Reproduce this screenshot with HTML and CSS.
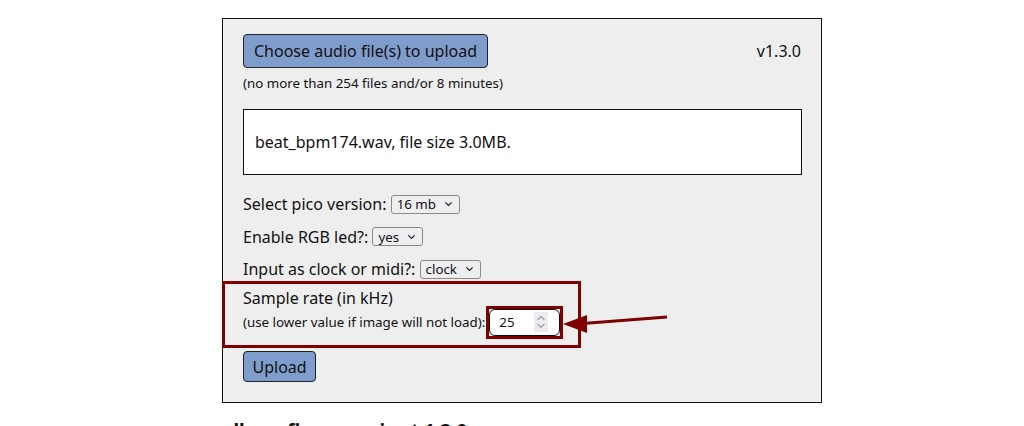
FILE: index.html
```html
<!DOCTYPE html>
<html>
<head>
<meta charset="utf-8">
<link rel="stylesheet" href="styles.css">
</head>
<body>
<div class="page">
  <div class="panel">
    <div class="top">
      <div>
        <button class="btn btn-big">Choose audio file(s) to upload</button>
        <div class="note">(no more than 254 files and/or 8 minutes)</div>
      </div>
      <div class="version">v1.3.0</div>
    </div>
    <div class="filebox">beat_bpm174.wav, file size 3.0MB.</div>
    <div class="rows">
      <div class="row">Select pico version: <span class="sel">16 mb<svg viewBox="0 0 10 6" class="chev"><path d="M1.5 1.2 5 4.6 8.5 1.2" /></svg></span></div>
      <div class="row">Enable RGB led?: <span class="sel">yes<svg viewBox="0 0 10 6" class="chev"><path d="M1.5 1.2 5 4.6 8.5 1.2" /></svg></span></div>
      <div class="row">Input as clock or midi?: <span class="sel">clock<svg viewBox="0 0 10 6" class="chev"><path d="M1.5 1.2 5 4.6 8.5 1.2" /></svg></span></div>
    </div>
    <div class="sample">
      <div class="sample-title">Sample rate (in kHz)</div>
      <div class="sample-row">
        <span class="note">(use lower value if image will not load):</span>
        <span class="numwrap">
          <span class="num">
            <span class="numval">25</span>
            <span class="spin"><svg viewBox="0 0 12 18" width="12" height="18"><path d="M2.5 7 6 3.5 9.5 7M2.5 11 6 14.5 9.5 11" fill="none" stroke="#9a9aa0" stroke-width="1.1"/></svg></span>
          </span>
        </span>
      </div>
    </div>
    <button class="btn btn-up">Upload</button>
    <svg class="arrow" width="106" height="26" viewBox="0 0 106 26">
      <line x1="104" y1="5" x2="20" y2="11.5" stroke="#7f0000" stroke-width="3"/>
      <polygon points="0,12 24,3 24,21" fill="#7f0000"/>
    </svg>
  </div>
  <div class="footer">all our firmware is at 1.3.0</div>
</div>
</body>
</html>
```
FILE: styles.css
```css
html, body {
  margin: 0;
  padding: 0;
  background: #ffffff;
}
body {
  font-family: "Noto Sans", "Open Sans", sans-serif;
  color: #111;
}
.page {
  padding: 18px 0 0 222px;
}
.panel {
  position: relative;
  width: 600px;
  height: 385px;
  box-sizing: border-box;
  border: 1px solid #111;
  background: #eeeeee;
  padding: 15px 20px 0 20px;
}
.top {
  display: flex;
  justify-content: space-between;
  align-items: flex-start;
}
.version {
  font-size: 16px;
  padding-top: 6px;
}
.btn {
  font-family: "Noto Sans", "Open Sans", sans-serif;
  background: #7f9dcc;
  border: 1px solid #222;
  border-radius: 4px;
  color: #111;
  cursor: pointer;
}
.btn-big {
  font-size: 16px;
  height: 34px;
  padding: 0 10px;
  display: block;
}
.note {
  font-size: 13.33px;
  margin-top: 6px;
  line-height: 18px;
}
.filebox {
  margin-top: 17px;
  width: 559px;
  height: 66px;
  box-sizing: border-box;
  background: #fff;
  border: 1px solid #111;
  display: flex;
  align-items: center;
  padding-left: 11px;
  font-size: 16px;
}
.rows {
  display: flex;
  flex-direction: column;
  gap: 4.5px;
  margin-top: 15px;
}
.row {
  font-size: 16px;
  height: 28px;
  display: flex;
  align-items: center;
  white-space: pre;
}
.sel {
  display: inline-flex;
  align-items: center;
  height: 19px;
  box-sizing: border-box;
  border: 1px solid #8a8a8a;
  border-radius: 3px;
  background: #efeff2;
  font-size: 13.33px;
  padding: 0 6px 0 5px;
  gap: 8px;
}
.chev {
  width: 9px;
  height: 6px;
  fill: none;
  stroke: #222;
  stroke-width: 1.4;
}
.sample {
  margin: -2px 0 0 -21px;
  width: 359px;
  height: 67px;
  box-sizing: border-box;
  border: 3px solid #7f0000;
  padding: 3px 0 0 18px;
}
.sample-title {
  font-size: 16px;
  line-height: 22px;
}
.sample-row {
  display: flex;
  align-items: center;
  margin-top: -3.5px;
}
.sample-row .note {
  margin-top: 0;
}
.numwrap {
  margin-left: 1px;
  border: 3px solid #7f0000;
  display: inline-block;
}
.num {
  display: flex;
  align-items: center;
  width: 71px;
  height: 27px;
  box-sizing: border-box;
  border: 1.5px solid #111;
  border-radius: 6px;
  background: #fff;
  padding-left: 9px;
  font-size: 13.33px;
}
.numval {
  flex: 1;
}
.spin {
  display: flex;
  align-items: center;
  justify-content: center;
  width: 14px;
  height: 20px;
  background: #ececf0;
  margin-right: 11px;
}
.btn-up {
  display: block;
  margin-top: 3px;
  font-size: 16px;
  height: 31px;
  padding: 0 8.5px;
}
.arrow {
  position: absolute;
  left: 340px;
  top: 293px;
}
.footer {
  margin-top: 15px;
  font-size: 19px;
  font-weight: bold;
  color: #111;
}
```
